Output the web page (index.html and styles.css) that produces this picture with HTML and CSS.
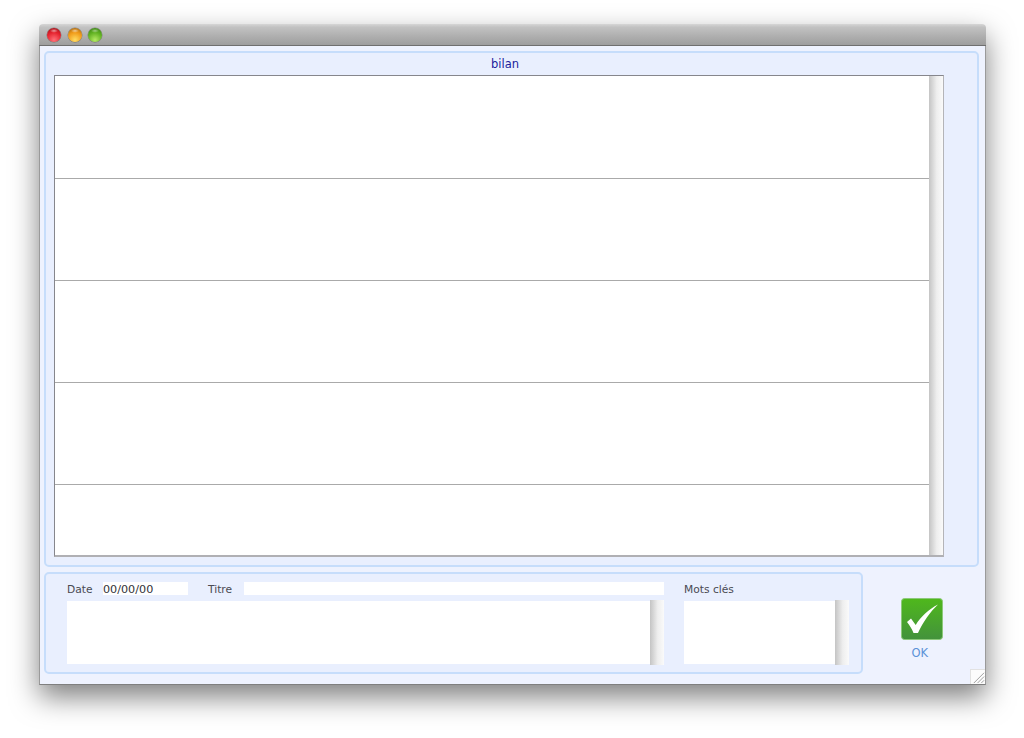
FILE: index.html
```html
<!DOCTYPE html>
<html lang="fr">
<head>
<meta charset="utf-8">
<title>bilan</title>
<link rel="stylesheet" href="styles.css">
</head>
<body>
<div class="window">
  <div class="titlebar">
    <span class="light light-red"></span>
    <span class="light light-amber"></span>
    <span class="light light-green"></span>
  </div>
  <div class="content">
    <section class="panel panel-main">
      <div class="panel-title">bilan</div>
      <div class="list">
        <div class="rows">
          <div class="row"></div>
          <div class="row"></div>
          <div class="row"></div>
          <div class="row"></div>
          <div class="row row-last"></div>
        </div>
        <div class="scrollbar scrollbar-main"></div>
      </div>
    </section>
    <div class="bottom">
      <section class="panel panel-form">
        <div class="form-left">
          <div class="field-line">
            <span class="label label-date">Date</span>
            <span class="input input-date">00/00/00</span>
            <span class="label label-titre">Titre</span>
            <span class="input input-titre"></span>
          </div>
          <div class="textbox textbox-notes"><div class="scrollbar scrollbar-box"></div></div>
        </div>
        <div class="form-right">
          <div class="label label-mots">Mots clés</div>
          <div class="textbox textbox-mots"><div class="scrollbar scrollbar-box"></div></div>
        </div>
      </section>
      <div class="ok">
        <svg class="ok-icon" width="42" height="42" viewBox="0 0 42 42">
          <defs>
            <linearGradient id="okfill" x1="0" y1="0" x2="0" y2="1">
              <stop offset="0" stop-color="#4fb81c"/>
              <stop offset="1" stop-color="#43923c"/>
            </linearGradient>
          </defs>
          <rect x="0.5" y="0.5" width="41" height="41" rx="3" fill="url(#okfill)" stroke="#8cc97a"/>
          <path d="M6 24 L10 20.5 L14.7 27 C20 18.5 28 11 37 6.5 C29 14 22 24 17 35 L12.5 35 C11 31 8.5 27 6 24 Z" fill="#fff"/>
        </svg>
        <span class="ok-label">OK</span>
      </div>
    </div>
    <svg class="grip" width="15" height="15" viewBox="0 0 15 15">
      <path d="M3 14 L14 3 M7 14 L14 7 M11 14 L14 11" stroke="#9a9a9a" stroke-width="1" fill="none"/>
    </svg>
  </div>
</div>
</body>
</html>
```
FILE: styles.css
```css
* { box-sizing: border-box; }
html, body { margin: 0; height: 100%; background: #fff; overflow: hidden; }
body {
  padding: 24px 0 0 39px;
  font-family: "DejaVu Sans", Verdana, sans-serif;
  font-size: 11px;
  color: #4a4a52;
}
.window {
  width: 947px;
  height: 661px;
  display: flex;
  flex-direction: column;
  border-radius: 4px 4px 0 0;
  box-shadow: 0 12px 28px rgba(0, 0, 0, .5);
}
.titlebar {
  height: 22px;
  flex: none;
  display: flex;
  align-items: center;
  gap: 6.5px;
  padding: 0 0 0 8px;
  background: linear-gradient(#d6d6d6, #c2c2c2 15%, #aeaeae 60%, #9e9e9e);
  border-bottom: 1px solid #6f6f6f;
  border-radius: 4px 4px 0 0;
}
.light {
  width: 14px;
  height: 14px;
  border-radius: 50%;
  box-shadow: 0 0 0 .5px rgba(0, 0, 0, .3);
}
.light-red {
  background:
    radial-gradient(ellipse 4px 2px at 50% 20%, rgba(255, 255, 255, .55), transparent),
    radial-gradient(circle at 50% 85%, #ff7079, #e5222d 55%, #8f141b);
}
.light-amber {
  background:
    radial-gradient(ellipse 4px 2px at 50% 20%, rgba(255, 255, 255, .55), transparent),
    radial-gradient(circle at 50% 85%, #ffdc62, #f09a18 55%, #9a5f12);
}
.light-green {
  background:
    radial-gradient(ellipse 4px 2px at 50% 20%, rgba(255, 255, 255, .45), transparent),
    radial-gradient(circle at 50% 85%, #b4ea62, #5fb020 55%, #347a16);
}
.content {
  flex: 1;
  position: relative;
  padding: 5px 5px 5px 4px;
  background: #eef2fe;
  border-left: 1px solid #9a9a9a;
  border-right: 1px solid #9a9a9a;
  border-bottom: 1px solid #7f7f7f;
  display: flex;
  flex-direction: column;
  gap: 5px;
}
.panel {
  border: 2px solid #c6ddfb;
  border-radius: 5px;
  background: #e9effe;
}
.panel-main {
  width: 935px;
  height: 516px;
  padding: 0 0 0 8px;
  flex: none;
}
.panel-title {
  height: 22px;
  line-height: 22px;
  color: #1c1c9c;
  text-align: center;
  font-size: 11.5px;
  width: 902px;
}
.list {
  width: 890px;
  height: 482px;
  display: flex;
  background: #fff;
  border-top: 1px solid #86868c;
  border-left: 1px solid #86868c;
  border-right: 1px solid #b4b4b8;
  border-bottom: 2px solid #b0b0b4;
}
.rows { flex: 1; display: flex; flex-direction: column; padding-top: 1px; }
.row { height: 102px; flex: none; border-bottom: 1px solid #aaa; }
.row-last { flex: 1; border-bottom: 0; }
.scrollbar {
  width: 14px;
  flex: none;
  background: linear-gradient(90deg, #c4c4c4, #eeeeee 55%, #fafafa);
}
.scrollbar-box { margin: -1px 0; }
.bottom { display: flex; flex: 1; }
.panel-form {
  width: 819px;
  height: 102px;
  display: flex;
  padding: 8px 0 0 21px;
}
.form-left { width: 597px; }
.form-right { width: 165px; margin-left: 20px; }
.field-line { height: 13px; display: flex; align-items: center; }
.label { font-size: 10.7px; line-height: 15px; height: 13px; }
.label-date { width: 36px; }
.label-titre { width: 36px; margin-left: 20px; }
.label-mots { height: 19px; }
.input {
  display: block;
  height: 13px;
  line-height: 15px;
  font-size: 11.2px;
  background: #fff;
  color: #33333a;
}
.input-date { width: 85px; }
.input-titre { width: 420px; }
.textbox {
  height: 63px;
  display: flex;
  justify-content: flex-end;
  background: #fff;
}
.textbox-notes { margin-top: 6px; }
.ok {
  width: 116px;
  display: flex;
  flex-direction: column;
  align-items: flex-start;
  padding: 26px 0 0 38px;
}
.ok-icon { display: block; }
.ok-label {
  margin: 7px 0 0 10.5px;
  line-height: 13px;
  font-size: 11.5px;
  color: #5b93d8;
}
.grip {
  position: absolute;
  right: 0;
  bottom: 0;
  background: #fcfcfc;
  border-top: 1px solid #e2e2e2;
  border-left: 1px solid #e2e2e2;
}
```
